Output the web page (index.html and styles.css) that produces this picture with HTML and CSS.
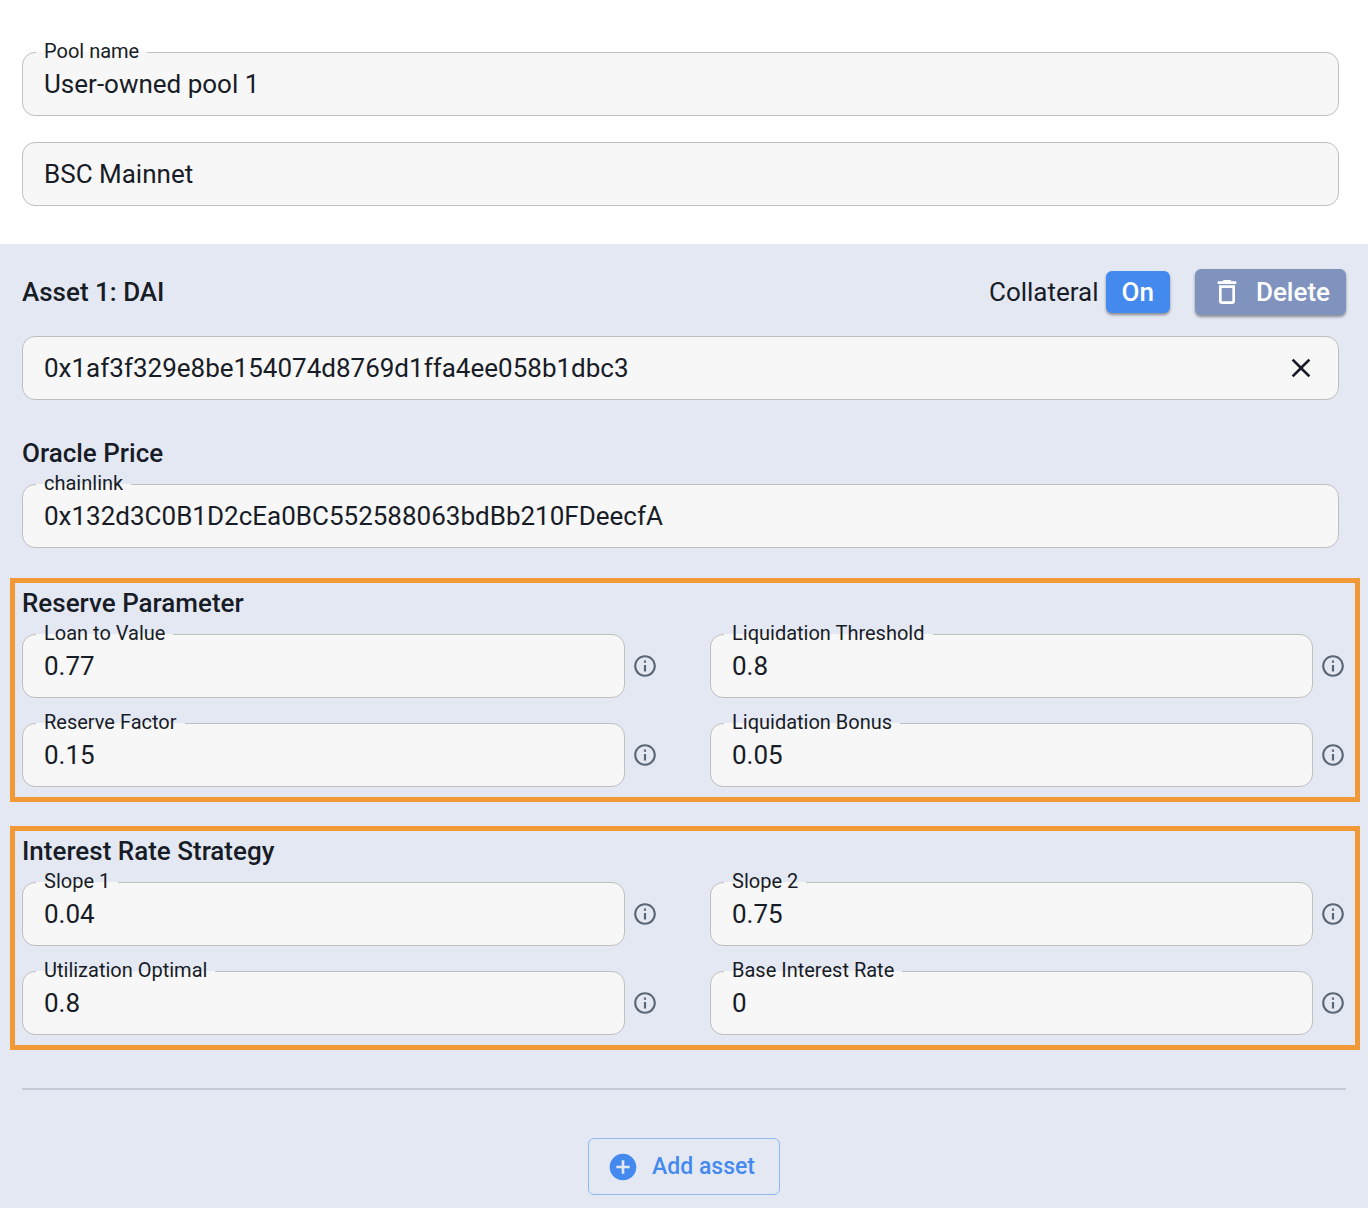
FILE: index.html
```html
<!DOCTYPE html>
<html lang="en">
<head>
<meta charset="utf-8">
<meta name="viewport" content="width=device-width, initial-scale=1">
<title>Create pool</title>
<link rel="stylesheet" href="styles.css">
</head>
<body>
<svg class="sprite" aria-hidden="true">
  <symbol id="info" viewBox="0 0 24 24"><path d="M11 7h2v2h-2zm0 4h2v6h-2zm1-9C6.48 2 2 6.48 2 12s4.48 10 10 10 10-4.480 10-10S17.520 2 12 2zm0 18c-4.410 0-8-3.590-8-8s3.590-8 8-8 8 3.590 8 8-3.590 8-8 8z"/></symbol>
</svg>
<form class="pool-form">
  <section class="pool">
    <div class="field">
      <label class="field-label" for="pool-name">Pool name</label>
      <input class="field-input" id="pool-name" type="text" value="User-owned pool 1">
    </div>
    <div class="field">
      <input class="field-input" type="text" aria-label="Network" value="BSC Mainnet">
    </div>
  </section>

  <section class="asset">
    <header class="asset-header">
      <h2 class="heading">Asset 1: DAI</h2>
      <div class="collateral">
        <span>Collateral</span>
        <button class="btn btn-toggle" type="button" aria-label="Collateral on">On</button>
      </div>
      <button class="btn btn-delete" type="button">
        <svg class="icon" viewBox="0 0 24 24" aria-hidden="true"><path d="M6 19c0 1.100.9 2 2 2h8c1.100 0 2-.9 2-2V7H6v12zM8 9h8v10H8V9zm7.500-5l-1-1h-5l-1 1H5v2h14V4h-3.500z"/></svg>
        Delete
      </button>
    </header>

    <div class="field field-wide">
      <input class="field-input" type="text" aria-label="Asset address" value="0x1af3f329e8be154074d8769d1ffa4ee058b1dbc3">
      <button class="clear" type="button" aria-label="Clear address">
        <svg class="icon" viewBox="0 0 24 24" aria-hidden="true"><path d="M19 6.410L17.590 5 12 10.590 6.410 5 5 6.410 10.590 12 5 17.590 6.410 19 12 13.410 17.590 19 19 17.590 13.410 12z"/></svg>
      </button>
    </div>

    <div class="oracle">
      <h2 class="heading">Oracle Price</h2>
      <div class="field field-wide">
        <label class="field-label" for="chainlink">chainlink</label>
        <input class="field-input" id="chainlink" type="text" value="0x132d3C0B1D2cEa0BC552588063bdBb210FDeecfA">
      </div>
    </div>

    <div class="group">
      <h2 class="heading">Reserve Parameter</h2>
      <div class="grid">
        <div class="cell">
          <div class="field">
            <label class="field-label" for="ltv">Loan to Value</label>
            <input class="field-input" id="ltv" type="text" value="0.77">
          </div>
          <button class="info" type="button" aria-label="About loan to value"><svg class="info-icon"><use href="#info"/></svg></button>
        </div>
        <div class="cell">
          <div class="field">
            <label class="field-label" for="threshold">Liquidation Threshold</label>
            <input class="field-input" id="threshold" type="text" value="0.8">
          </div>
          <button class="info" type="button" aria-label="About liquidation threshold"><svg class="info-icon"><use href="#info"/></svg></button>
        </div>
        <div class="cell">
          <div class="field">
            <label class="field-label" for="factor">Reserve Factor</label>
            <input class="field-input" id="factor" type="text" value="0.15">
          </div>
          <button class="info" type="button" aria-label="About reserve factor"><svg class="info-icon"><use href="#info"/></svg></button>
        </div>
        <div class="cell">
          <div class="field">
            <label class="field-label" for="bonus">Liquidation Bonus</label>
            <input class="field-input" id="bonus" type="text" value="0.05">
          </div>
          <button class="info" type="button" aria-label="About liquidation bonus"><svg class="info-icon"><use href="#info"/></svg></button>
        </div>
      </div>
    </div>

    <div class="group">
      <h2 class="heading">Interest Rate Strategy</h2>
      <div class="grid">
        <div class="cell">
          <div class="field">
            <label class="field-label" for="slope1">Slope 1</label>
            <input class="field-input" id="slope1" type="text" value="0.04">
          </div>
          <button class="info" type="button" aria-label="About slope 1"><svg class="info-icon"><use href="#info"/></svg></button>
        </div>
        <div class="cell">
          <div class="field">
            <label class="field-label" for="slope2">Slope 2</label>
            <input class="field-input" id="slope2" type="text" value="0.75">
          </div>
          <button class="info" type="button" aria-label="About slope 2"><svg class="info-icon"><use href="#info"/></svg></button>
        </div>
        <div class="cell">
          <div class="field">
            <label class="field-label" for="optimal">Utilization Optimal</label>
            <input class="field-input" id="optimal" type="text" value="0.8">
          </div>
          <button class="info" type="button" aria-label="About utilization optimal"><svg class="info-icon"><use href="#info"/></svg></button>
        </div>
        <div class="cell">
          <div class="field">
            <label class="field-label" for="base">Base Interest Rate</label>
            <input class="field-input" id="base" type="text" value="0">
          </div>
          <button class="info" type="button" aria-label="About base interest rate"><svg class="info-icon"><use href="#info"/></svg></button>
        </div>
      </div>
    </div>

    <hr class="divider">
    <button class="btn btn-add" type="button">
      <svg class="icon" viewBox="0 0 24 24" aria-hidden="true"><path d="M12 2C6.480 2 2 6.480 2 12s4.480 10 10 10 10-4.480 10-10S17.520 2 12 2zm5 11h-4v4h-2v-4H7v-2h4V7h2v4h4v2z"/></svg>
      Add asset
    </button>
  </section>
</form>
</body>
</html>
```
FILE: styles.css
```css
* {
  box-sizing: border-box;
}

body {
  margin: 0;
  background: #fff;
  color: #171c26;
  font: 400 26px/32px Roboto, sans-serif;
}

.sprite {
  display: none;
}

.pool-form {
  display: flex;
  flex-direction: column;
  min-height: 100vh;
}

.pool {
  display: flex;
  flex-direction: column;
  gap: 26px;
  padding: 52px 29px 38px 22px;
}

/* Outlined text field; the label sits in a notch of the top border */
.field {
  position: relative;
  display: flex;
  align-items: center;
  flex: 1;
  min-width: 0;
  height: 64px;
  flex-basis: 64px;
  padding: 0 21px;
  border: 1px solid #bfbfbf;
  border-radius: 13px;
  background: #f7f7f7;
}

.field-wide {
  flex: none;
  margin-right: 7px;
}

.field-label {
  position: absolute;
  top: -14px;
  left: 13px;
  padding: 0 8px;
  background: linear-gradient(#f7f7f7, #f7f7f7) 0 13px / 100% 1px no-repeat;
  font-size: 20px;
  line-height: 24px;
  white-space: nowrap;
}

.field-input {
  flex: 1;
  min-width: 0;
  height: 32px;
  padding: 0;
  border: 0;
  outline: 0;
  background: none;
  color: inherit;
  font: inherit;
}

.heading {
  margin: 0;
  font-size: 26px;
  font-weight: 500;
  line-height: 32px;
}

.asset {
  flex: 1;
  display: flex;
  flex-direction: column;
  padding: 24px 22px 13px;
  background: #e4e8f3;
}

.asset-header {
  display: flex;
  align-items: center;
  height: 48px;
  margin-bottom: 20px;
}

.collateral {
  display: flex;
  align-items: center;
  gap: 7px;
  margin: 0 25px 0 auto;
}

.btn {
  display: flex;
  align-items: center;
  justify-content: center;
  gap: 13px;
  border: 0;
  border-radius: 6px;
  color: #fff;
  font: 500 26px/32px Roboto, sans-serif;
  cursor: pointer;
}

.btn-toggle {
  height: 42px;
  padding: 0 16px;
  background: #448aee;
  box-shadow: 0 2px 3px rgba(0, 0, 0, 0.4);
}

.btn-delete {
  height: 46px;
  padding: 0 16px;
  background: #8093be;
  box-shadow: 0 2px 3px rgba(0, 0, 0, 0.4);
}

.icon {
  flex: none;
  width: 32px;
  height: 32px;
  fill: currentColor;
}

.clear,
.info {
  display: flex;
  padding: 0;
  border: 0;
  background: none;
  color: inherit;
  cursor: pointer;
}

.oracle {
  display: flex;
  flex-direction: column;
  gap: 15px;
  margin: 37px 0 30px;
}

.group {
  margin: 0 -14px 24px -12px;
  padding: 4px 9px 10px 7px;
  border: 5px solid #f19937;
}

.grid {
  display: grid;
  grid-template-columns: 1fr 1fr;
  gap: 25px 52px;
  margin-top: 15px;
}

.cell {
  display: flex;
  align-items: center;
  gap: 7px;
}

.info {
  color: #5b6675;
}

.info-icon {
  width: 26px;
  height: 26px;
  fill: currentColor;
}

.divider {
  width: 100%;
  height: 2px;
  margin: 14px 0 48px;
  border: 0;
  background: #c6cad6;
}

.btn-add {
  align-self: center;
  height: 57px;
  padding: 0 24px 0 18px;
  border: 1px solid #8fb8f1;
  background: none;
  color: #448aee;
  font-size: 23px;
}
```
